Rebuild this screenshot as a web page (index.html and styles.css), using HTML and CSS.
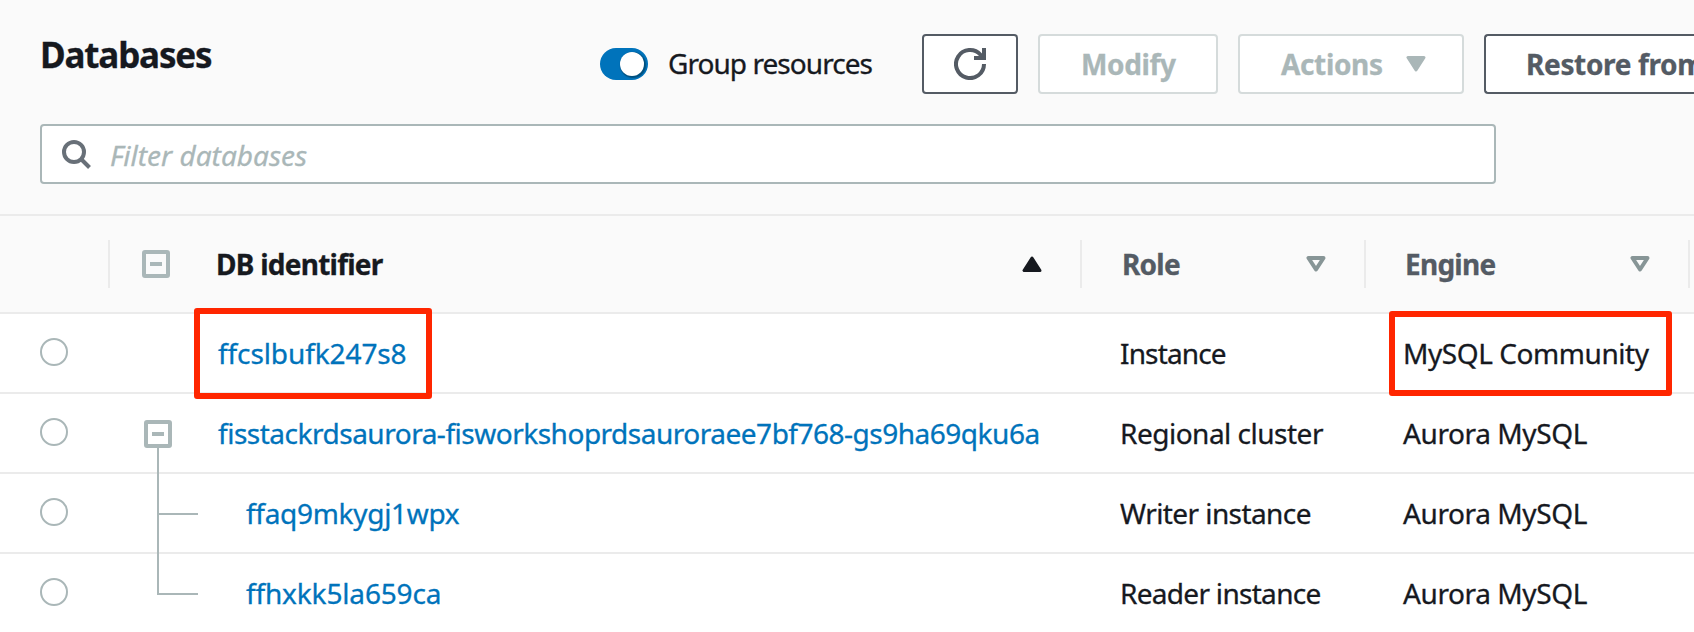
FILE: index.html
```html
<!DOCTYPE html>
<html lang="en">
<head>
<meta charset="utf-8">
<title>Databases</title>
<link rel="stylesheet" href="styles.css">
</head>
<body>
<header class="panel-header">
  <div class="toolbar">
    <h1 class="title"><span class="t-title">Databases</span></h1>
    <div class="toggle"><span class="knob"></span></div>
    <span class="toggle-label t-group">Group resources</span>
    <div class="actions">
      <button class="btn btn-icon" aria-label="Refresh">
        <svg width="32" height="32" viewBox="0 0 32 32" fill="none" stroke="currentColor" stroke-width="4"><path d="M30 16A14 14 0 1 1 26.5 6.8L28 9"/><path d="M30 0V10H20"/></svg>
      </button>
      <button class="btn btn-modify disabled"><span class="t-modify">Modify</span></button>
      <button class="btn btn-actions disabled"><span class="t-actions">Actions</span>
        <svg width="20" height="16" viewBox="0 0 20 16"><path d="M2 1.5H18L10 14Z" fill="currentColor" stroke="currentColor" stroke-width="3" stroke-linejoin="round"/></svg>
      </button>
      <button class="btn btn-restore"><span class="t-restore">Restore from</span></button>
    </div>
  </div>
  <div class="search">
    <svg width="32" height="32" viewBox="0 0 32 32" fill="none" stroke="currentColor" stroke-width="4"><circle cx="14" cy="14" r="10"/><path d="M21 21L29.5 29.5"/></svg>
    <span class="placeholder t-filter">Filter databases</span>
  </div>
</header>
<main class="table">
  <div class="row head">
    <div class="cell select"></div>
    <div class="cell id"><span class="box"></span><span class="label t-dbid">DB identifier</span>
      <svg width="20" height="16" viewBox="0 0 20 16"><path d="M2 14.5H18L10 2Z" fill="currentColor" stroke="currentColor" stroke-width="3" stroke-linejoin="round"/></svg></div>
    <div class="cell role"><span class="label t-role">Role</span>
      <svg class="sort" width="20" height="16" viewBox="0 0 20 16"><path d="M2.5 2H17.5L10 13.5Z" fill="none" stroke="currentColor" stroke-width="4" stroke-linejoin="round"/></svg></div>
    <div class="cell engine"><span class="label t-engine">Engine</span>
      <svg class="sort" width="20" height="16" viewBox="0 0 20 16"><path d="M2.5 2H17.5L10 13.5Z" fill="none" stroke="currentColor" stroke-width="4" stroke-linejoin="round"/></svg></div>
    <div class="cell"></div>
  </div>
  <div class="row">
    <div class="cell select"><span class="radio"></span></div>
    <div class="cell id"><a class="top t-id1">ffcslbufk247s8</a><span class="mark mark-id"></span></div>
    <div class="cell role"><span class="t-role1">Instance</span></div>
    <div class="cell engine"><span class="t-eng1">MySQL Community</span><span class="mark mark-engine"></span></div>
  </div>
  <div class="row">
    <div class="cell select"><span class="radio"></span></div>
    <div class="cell id"><span class="box"></span><span class="tree stem"></span><a class="top t-id2">fisstackrdsaurora-fisworkshoprdsauroraee7bf768-gs9ha69qku6a</a></div>
    <div class="cell role"><span class="t-role2">Regional cluster</span></div>
    <div class="cell engine"><span class="t-eng2">Aurora MySQL</span></div>
  </div>
  <div class="row">
    <div class="cell select"><span class="radio"></span></div>
    <div class="cell id"><span class="tree branch"></span><span class="tree below"></span><a class="child t-id3">ffaq9mkygj1wpx</a></div>
    <div class="cell role"><span class="t-role3">Writer instance</span></div>
    <div class="cell engine"><span class="t-eng2">Aurora MySQL</span></div>
  </div>
  <div class="row">
    <div class="cell select"><span class="radio"></span></div>
    <div class="cell id"><span class="tree branch"></span><a class="child t-id4">ffhxkk5la659ca</a></div>
    <div class="cell role"><span class="t-role4">Reader instance</span></div>
    <div class="cell engine"><span class="t-eng2">Aurora MySQL</span></div>
  </div>
</main>
</body>
</html>
```

FILE: styles.css
```css
* { box-sizing: border-box; }
html, body { overflow: hidden; }
body {
  margin: 0;
  width: 1694px;
  height: 632px;
  background: #fff;
  color: #16191f;
  font: 28px/40px "Noto Sans", sans-serif;
  white-space: nowrap;
  -webkit-text-stroke: .3px currentColor;
}
svg { display: block; flex: none; }

.panel-header {
  height: 216px;
  padding: 34px 0 0 40px;
  background: #fafafa;
  border-bottom: 2px solid #ebebeb;
  overflow: hidden;
}
.toolbar { display: flex; align-items: center; height: 60px; }
.title { flex: none; margin: 0 0 18px; width: 560px; font-size: 35px; line-height: 44px; font-weight: 700; }
.toggle { flex: none; width: 48px; height: 32px; padding: 4px; border-radius: 16px; background: #0073bb; }
.knob { display: block; width: 24px; height: 24px; margin-left: 16px; border-radius: 50%; background: #fff; box-shadow: 1px 1px 1px 1px rgba(0, 28, 36, .4); }
.toggle-label { flex: none; width: 254px; margin-left: 20px; padding-bottom: 2px; }
.actions { display: flex; flex: 1; min-width: 0; gap: 20px; }
.btn {
  display: flex;
  align-items: center;
  flex: none;
  height: 60px;
  padding: 0 0 0 41px;
  border: 2px solid #545b64;
  border-radius: 4px;
  background: #fff;
  color: #545b64;
  font: 700 28px/40px "Noto Sans", sans-serif;
}
.btn.disabled { border-color: #d5dbdb; color: #aab7b8; }
.btn-icon { width: 96px; padding: 0 30px; }
.btn-modify { width: 180px; }
.btn-actions { width: 226px; justify-content: space-between; padding-right: 36px; }
.btn-restore { flex: 1; min-width: 0; padding-left: 40px; border-right: 0; border-radius: 4px 0 0 4px; overflow: hidden; }

.search {
  display: flex;
  align-items: center;
  gap: 18px;
  width: 1456px;
  height: 60px;
  margin-top: 30px;
  padding-left: 18px;
  border: 2px solid #aab7b8;
  border-radius: 4px;
  background: #fff;
  color: #687078;
}
.placeholder { padding-top: 2px; color: #aab7b8; font-style: italic; }

.row { display: grid; grid-template-columns: 108px 972px 284px 324px 1fr; height: 80px; border-bottom: 2px solid #ebebeb; }
.cell { position: relative; display: flex; align-items: center; }
.role { padding-left: 40px; }
.engine { padding-left: 39px; }
.id { padding-left: 110px; }
.child { margin-left: 28px; }
a { color: #0073bb; }

.head { height: 98px; background: #fafafa; font-weight: 700; }
.head .cell:not(.select) { height: 48px; margin-top: 24px; border-left: 2px solid #ebebeb; }
.head .id { padding: 0 38px 0 32px; }
.head .role, .head .engine { padding: 0 38px 0 40px; color: #545b64; }
.head .engine { padding-left: 39px; }
.head .label { flex: 1; }
.head .box { margin-right: 46px; }
.sort { color: #879596; }

.radio { width: 28px; height: 28px; margin: 0 0 2px 40px; border: 2px solid #aab7b8; border-radius: 50%; }
.box { display: flex; align-items: center; justify-content: center; flex: none; width: 28px; height: 28px; border: 4px solid #aab7b8; border-radius: 3px; }
.box::before { content: ""; width: 12px; height: 4px; background: #aab7b8; }
.row:not(.head) .box { margin: 2px 46px 0 -74px; }

/* tree connectors cross row borders */
.tree { position: absolute; left: 49px; width: 2px; background: #aab7b8; }
.stem { top: 54px; height: 67px; }
.branch { top: 39px; width: 41px; height: 2px; }
.below { top: 41px; height: 80px; }

/* highlight frames over the table */
.mark { position: absolute; border: 6px solid #ff2600; border-radius: 3px; }
.mark-id { left: 86px; top: -6px; width: 238px; height: 91px; }
.mark-engine { left: 25px; top: -3px; width: 283px; height: 85px; }

/* tracking */
.t-title { letter-spacing: -1.15px; }
.t-group { letter-spacing: -.95px; }
.t-modify, .t-actions, .t-restore { letter-spacing: -.35px; }
.t-dbid, .t-role, .t-engine { letter-spacing: -.75px; }
.t-id1 { letter-spacing: -.1px; }
.t-id2 { letter-spacing: -.49px; }
.t-id3 { letter-spacing: -.3px; }
.t-id4 { letter-spacing: -.15px; }
.t-role1 { letter-spacing: -.85px; }
.t-role2 { letter-spacing: -.5px; }
.t-role3 { letter-spacing: -.58px; }
.t-role4 { letter-spacing: -.7px; }
.t-eng1 { letter-spacing: -.43px; }
.t-eng2 { letter-spacing: -.4px; }
```
